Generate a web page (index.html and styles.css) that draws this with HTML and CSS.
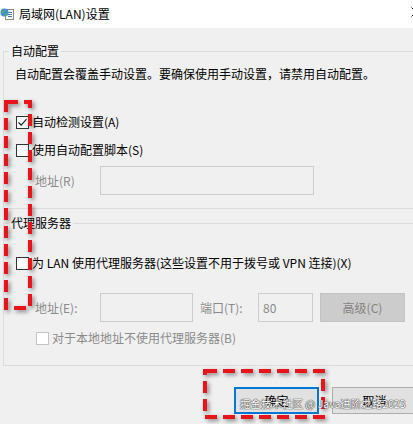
FILE: index.html
```html
<!DOCTYPE html>
<html lang="zh-CN">
<head>
    <meta charset="UTF-8">
    <title>局域网(LAN)设置</title>
    <link rel="stylesheet" href="styles.css">
</head>
<body>

<div class="titlebar">
    <svg class="app-icon" viewBox="0 0 14 14">
        <rect x="5.5" y="2.5" width="8" height="10" fill="#fff" stroke="#8a8a8a"/>
        <line x1="8" y1="5.5" x2="12" y2="5.5" stroke="#3b78c4"/>
        <line x1="8" y1="7.5" x2="12" y2="7.5" stroke="#3b78c4"/>
        <line x1="8" y1="9.5" x2="12" y2="9.5" stroke="#3b78c4"/>
        <circle cx="4.5" cy="5.5" r="4" fill="#3f8fd6"/>
        <path d="M2 3.5 Q4 2.5 5 4 Q4 6 2.5 6.5 Z M5.5 6.5 Q7.5 6 8 7.5 Q6.5 9.5 5 9 Z" fill="#63b248"/>
    </svg>
    <span class="title">局域网(LAN)设置</span>
    <svg class="close" viewBox="0 0 10 10">
        <path d="M0.5 0.5 L9.5 9.5 M9.5 0.5 L0.5 9.5" stroke="#111" stroke-width="1"/>
    </svg>
</div>

<div class="content">
    <fieldset class="group group-auto">
        <legend>自动配置</legend>
        <p class="desc">自动配置会覆盖手动设置。要确保使用手动设置，请禁用自动配置。</p>
        <div class="check check-detect">
            <span class="box">
                <svg viewBox="0 0 11 11"><path d="M1.5 5.5 L4.2 8.2 L9.5 2.2" fill="none" stroke="#222" stroke-width="1.2"/></svg>
            </span>
            自动检测设置(A)
        </div>
        <div class="check check-script">
            <span class="box"></span>
            使用自动配置脚本(S)
        </div>
        <div class="field-row row-script">
            <span class="field-label">地址(R)</span>
            <span class="input input-script"></span>
        </div>
    </fieldset>

    <fieldset class="group group-proxy">
        <legend>代理服务器</legend>
        <div class="check check-proxy">
            <span class="box"></span>
            为 LAN 使用代理服务器(这些设置不用于拨号或 VPN 连接)(X)
        </div>
        <div class="field-row row-proxy">
            <span class="field-label">地址(E):</span>
            <span class="input input-addr"></span>
            <span class="port-label">端口(T):</span>
            <span class="input input-port">80</span>
            <span class="btn btn-advanced">高级(C)</span>
        </div>
        <div class="check check-local">
            <span class="box"></span>
            对于本地地址不使用代理服务器(B)
        </div>
    </fieldset>

    <div class="actions">
        <span class="btn btn-ok">确定</span>
        <span class="btn">取消</span>
    </div>
</div>

<!-- red highlight marks drawn over the dialog -->
<svg class="mark mark-left" width="40" height="220">
    <rect x="6" y="6" width="24" height="206" fill="none" stroke="#e8141b" stroke-width="4" stroke-dasharray="12 6"/>
</svg>
<svg class="mark mark-ok" width="140" height="60">
    <rect x="7" y="7" width="118" height="46" fill="none" stroke="#e8141b" stroke-width="4" stroke-dasharray="12 6"/>
</svg>

<div class="watermark">掘金技术社区 @ Java进阶之路2023</div>

</body>
</html>
```

FILE: styles.css
```css
body {
    margin: 0;
    width: 413px;
    height: 424px;
    overflow: hidden;
    position: relative;
    background: #f0f0f0;
    font-family: "Noto Sans CJK SC", "Microsoft YaHei", sans-serif;
    font-size: 12px;
    line-height: 16px;
    color: #000;
}
.titlebar {
    height: 28px;
    background: #fff;
    display: flex;
    align-items: center;
}
.app-icon {
    width: 14px;
    height: 14px;
    margin-right: 5px;
}
.close {
    width: 10px;
    height: 10px;
    margin-left: auto;
    margin-right: -8px;
    margin-top: -4px;
}
.content {
    padding-left: 3px;
}
.group {
    border: 1px solid #dcdcdc;
    margin: 15px -20px 0 0;
    padding: 0 0 13px 11px;
    min-width: 0;
}
.group legend {
    padding: 0 2px;
    margin-left: -6px;
    line-height: 16px;
}
.group-proxy {
    margin-top: 6px;
    padding-bottom: 19px;
}
.desc {
    margin: 7px 0 0;
}
.check {
    display: flex;
    align-items: center;
    gap: 3px;
    margin-left: 1px;
}
.box {
    width: 13px;
    height: 13px;
    box-sizing: border-box;
    border: 1px solid #333;
    background: #fff;
    display: flex;
}
.box svg {
    width: 11px;
    height: 11px;
}
.check-detect {
    margin-top: 32px;
}
.check-script {
    margin-top: 12px;
}
.check-proxy {
    margin-top: 24px;
}
.check-local {
    margin-top: 8px;
    margin-left: 21px;
    color: #8a8a8a;
}
.check-local .box {
    border-color: #c4c4c4;
}
.field-row {
    display: flex;
    align-items: center;
    height: 29px;
    color: #8a8a8a;
}
.row-script {
    margin-top: 8px;
}
.row-proxy {
    margin-top: 22px;
}
.field-label {
    margin-left: 20px;
    width: 65px;
}
.input {
    height: 29px;
    box-sizing: border-box;
    border: 1px solid #cccccc;
    background: #f0f0f0;
    display: flex;
    align-items: center;
    padding-left: 4px;
}
.input-script {
    width: 214px;
}
.input-addr {
    width: 93px;
}
.port-label {
    margin-left: 7px;
    width: 58px;
}
.input-port {
    width: 55px;
}
.btn {
    width: 85px;
    height: 27px;
    box-sizing: border-box;
    border: 1px solid #adadad;
    background: #e1e1e1;
    display: flex;
    align-items: center;
    justify-content: center;
}
.btn-advanced {
    margin-left: 7px;
    height: 29px;
    background: #cccccc;
    border-color: #c4c4c4;
    color: #838383;
}
.btn-ok {
    border: 2px solid #0078d7;
}
.actions {
    display: flex;
    justify-content: flex-end;
    gap: 13px;
    margin: 21px -4px 0 0;
}
.mark {
    position: absolute;
    filter: drop-shadow(2px 2px 2px rgba(0, 0, 0, 0.45));
}
.mark-left {
    left: 0;
    top: 96px;
}
.mark-ok {
    left: 198px;
    top: 364px;
}
.watermark {
    position: absolute;
    left: 240px;
    top: 397px;
    font-size: 10.5px;
    line-height: 14px;
    color: #fff;
    text-shadow: 0 0 1px #444, 0 0 1px #444, 0 0 1px #444;
    white-space: nowrap;
}
```
